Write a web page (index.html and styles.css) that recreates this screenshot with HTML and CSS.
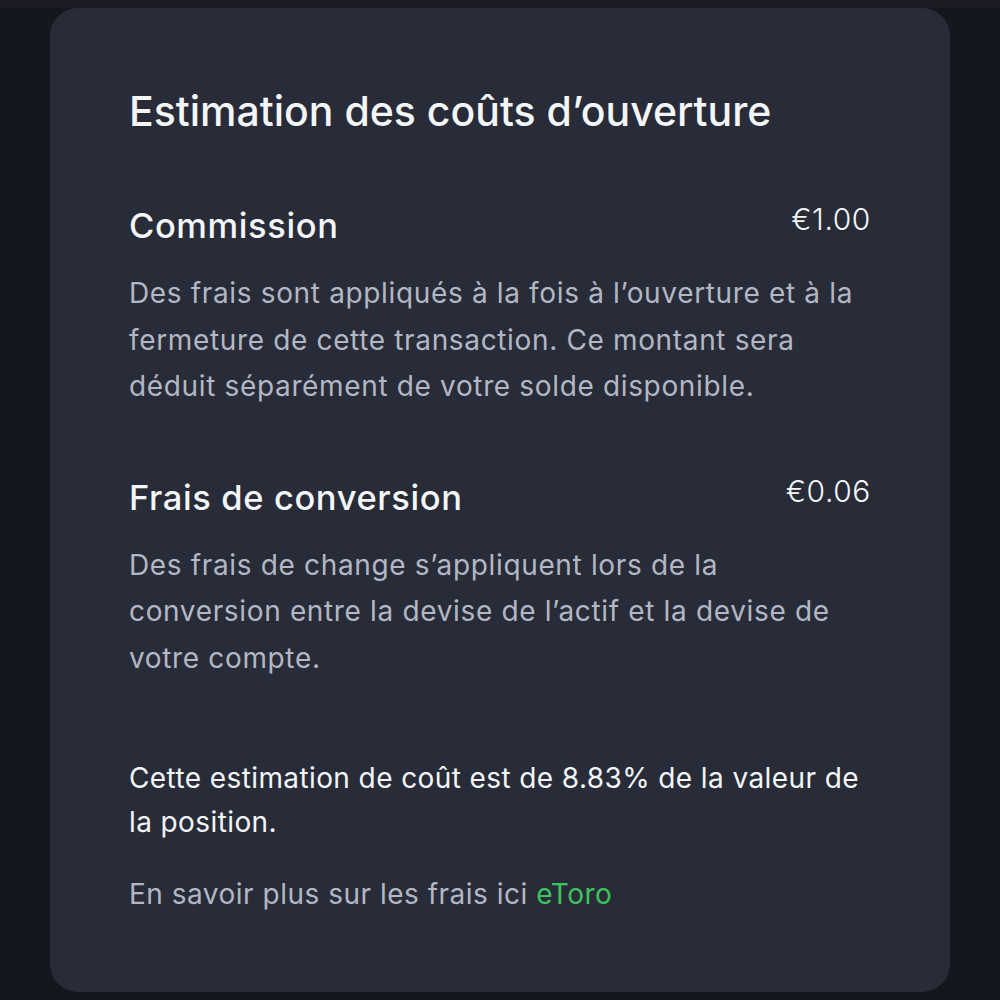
FILE: index.html
```html
<!DOCTYPE html>
<html lang="fr">
<head>
<meta charset="utf-8">
<link rel="stylesheet" href="styles.css">
</head>
<body>
<div class="topstrip"></div>
<main class="card">
  <h1 class="title">Estimation des coûts d’ouverture</h1>
  <section class="fee">
    <div class="fee-head">
      <h2 class="fee-name">Commission</h2>
      <span class="fee-value">€1.00</span>
    </div>
    <p class="fee-desc">Des frais sont appliqués à la fois à l’ouverture et à la fermeture de cette transaction. Ce montant sera déduit séparément de votre solde disponible.</p>
  </section>
  <section class="fee fee-second">
    <div class="fee-head">
      <h2 class="fee-name">Frais de conversion</h2>
      <span class="fee-value">€0.06</span>
    </div>
    <p class="fee-desc">Des frais de change s’appliquent lors de la conversion entre la devise de l’actif et la devise de votre compte.</p>
  </section>
  <p class="summary">Cette estimation de coût est de 8.83% de la valeur de la position.</p>
  <p class="more">En savoir plus sur les frais ici <a class="link" href="#">eToro</a></p>
</main>
</body>
</html>
```
FILE: styles.css
```css
html, body {
  margin: 0;
  padding: 0;
}
body {
  width: 1000px;
  height: 1000px;
  background: #15171e;
  font-family: Inter, "Noto Sans", sans-serif;
  overflow: hidden;
}
.topstrip {
  height: 8px;
  background: #1a1b25;
}
.card {
  margin: 0 50px;
  height: 984px;
  box-sizing: border-box;
  background: #282c38;
  border-radius: 28px;
  padding: 78px 79px 0 79px;
}
.title {
  margin: 0;
  font-size: 41px;
  line-height: 50px;
  font-weight: 500;
  color: #f4f5f7;
}
.fee {
  margin-top: 68px;
}
.fee-second {
  margin-top: 66px;
}
.fee-head {
  display: flex;
  justify-content: space-between;
  align-items: flex-start;
  height: 44px;
}
.fee-name {
  margin: 0;
  font-size: 34.5px;
  line-height: 44px;
  font-weight: 500;
  letter-spacing: 0.6px;
  color: #f4f5f7;
}
.fee-value {
  font-size: 30px;
  line-height: 40px;
  font-weight: 300;
  letter-spacing: 0.6px;
  color: #f4f5f7;
  margin-top: -5px;
}
.fee-desc {
  margin: 22px 0 0;
  font-size: 28px;
  line-height: 46.5px;
  letter-spacing: 0.65px;
  color: #b3b7c3;
}
.summary {
  margin: 75px 0 0;
  font-size: 28px;
  line-height: 44px;
  letter-spacing: 0.4px;
  color: #f4f5f7;
}
.more {
  margin: 28px 0 0;
  font-size: 28px;
  line-height: 44px;
  letter-spacing: 0.5px;
  color: #b3b7c3;
}
.link {
  color: #3cc35c;
  text-decoration: none;
}
```
